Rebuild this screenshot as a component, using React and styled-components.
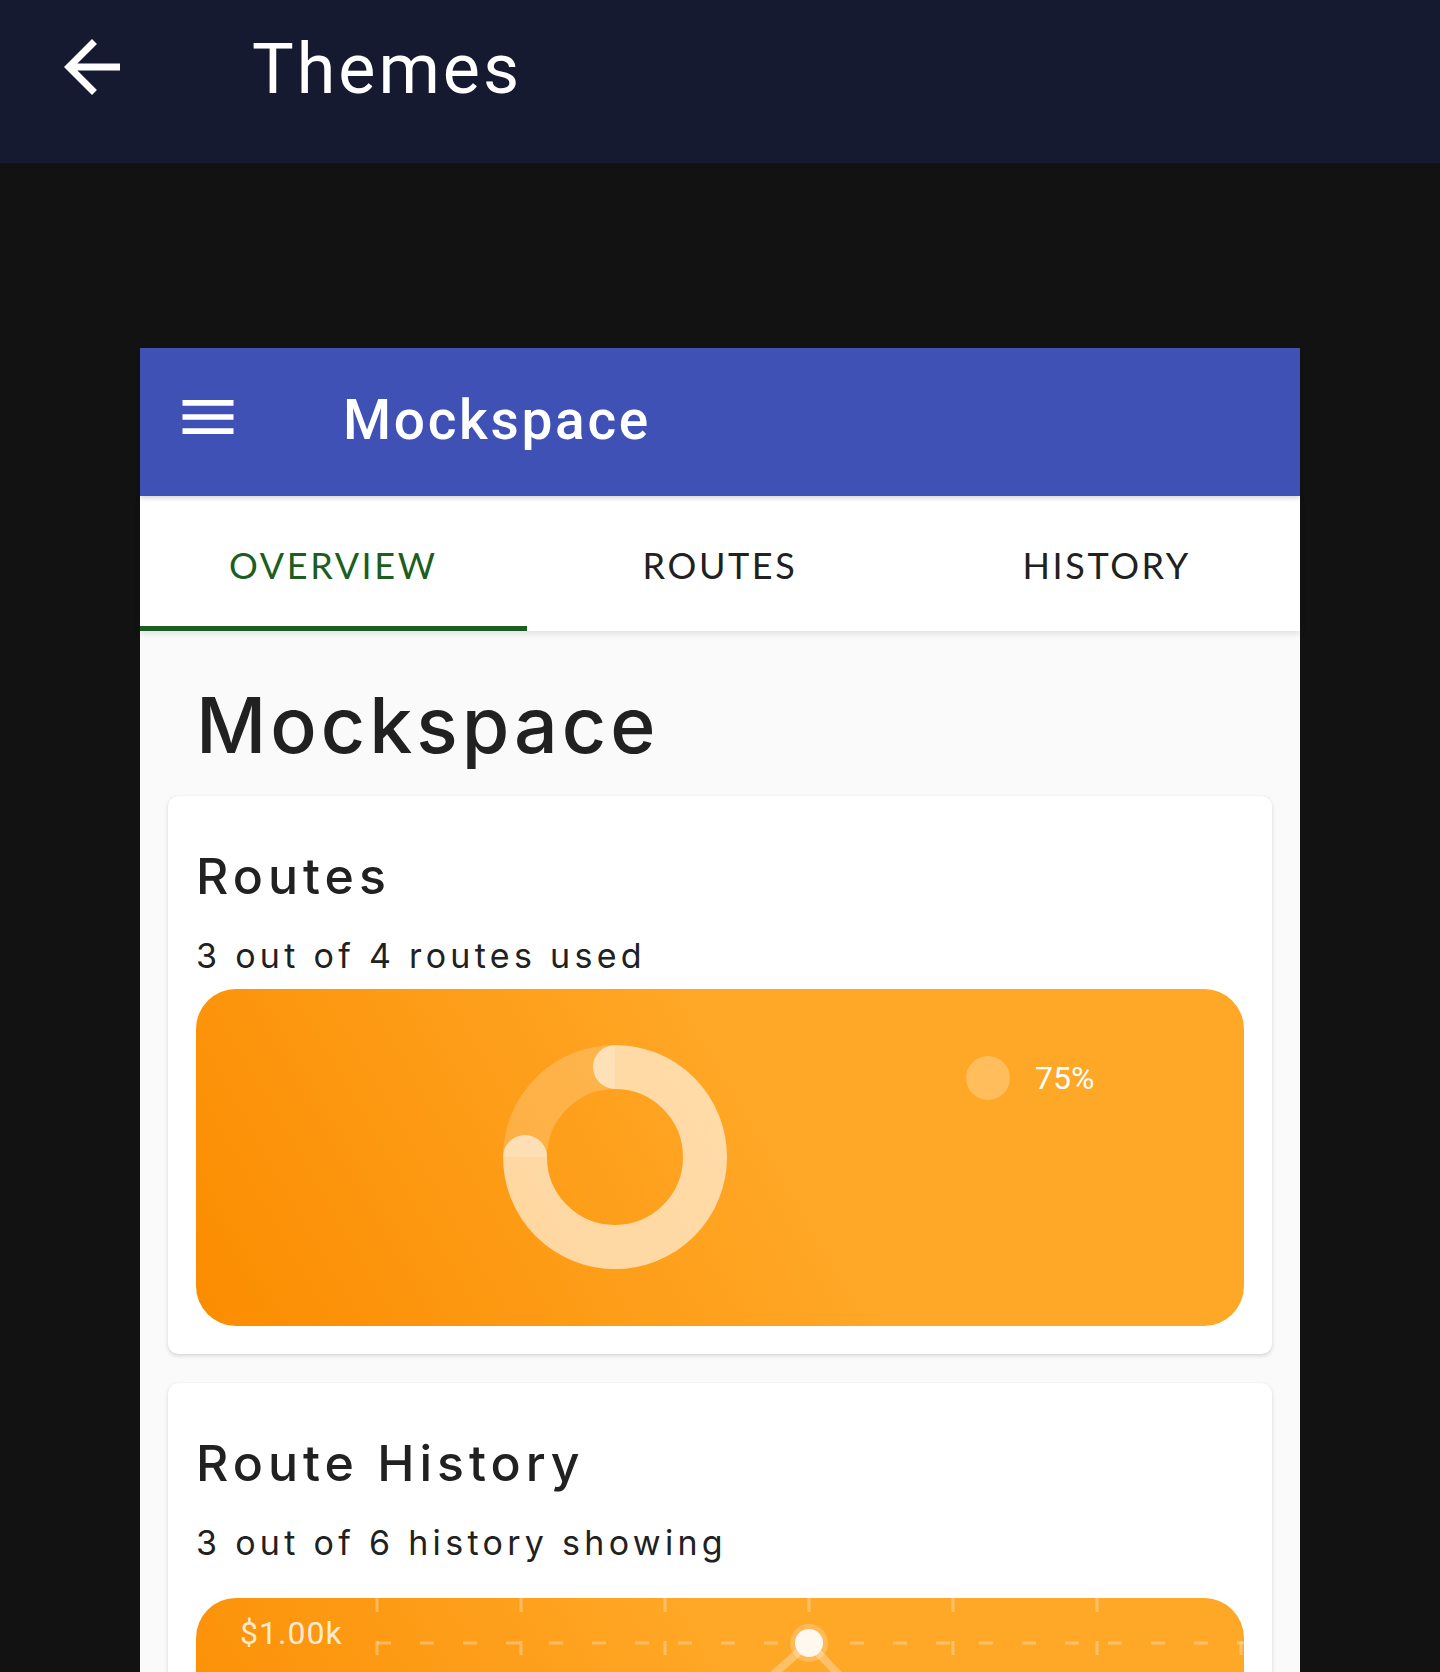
import React from 'react';
import styled, { createGlobalStyle } from 'styled-components';

const Global = createGlobalStyle`
  html, body { margin: 0; padding: 0; background: #121212; overflow: hidden; }
  body { font-family: Roboto, "Liberation Sans", sans-serif; }
  * { box-sizing: border-box; }
`;

const Page = styled.div`
  width: 1440px;
  height: 1672px;
  overflow: hidden;
  background: #121212;
`;

const TopBar = styled.header`
  height: 163px;
  background: #161a30;
  display: flex;
  align-items: flex-start;
  padding-left: 50px;
`;

const BackIcon = styled.svg`
  width: 84px;
  height: 84px;
  margin-top: 25px;
  flex: none;
  fill: #ffffff;
`;

const TopTitle = styled.h1`
  margin: 34px 0 0 118px;
  font: 400 70px/70px Roboto, "Liberation Sans", sans-serif;
  letter-spacing: 3px;
  color: #ffffff;
`;

const Stage = styled.main`
  padding-top: 185px;
`;

const Phone = styled.section`
  width: 1160px;
  margin: 0 auto;
  background: #fafafa;
  min-height: 1400px;
`;

const AppBar = styled.div`
  position: relative;
  z-index: 2;
  height: 148px;
  background: #3f51b5;
  display: flex;
  align-items: flex-start;
  padding-left: 34px;
  box-shadow: 0 2px 5px rgba(0, 0, 0, 0.18);
`;

const MenuIcon = styled.svg`
  width: 68px;
  height: 68px;
  margin-top: 35px;
  flex: none;
  fill: #ffffff;
`;

const AppTitle = styled.div`
  margin: 45px 0 0 101px;
  font: 500 55px/55px Roboto, "Liberation Sans", sans-serif;
  letter-spacing: 2.7px;
  color: #ffffff;
`;

const Tabs = styled.nav`
  position: relative;
  z-index: 1;
  display: grid;
  grid-template-columns: repeat(3, 1fr);
  background: #ffffff;
  box-shadow: 0 3px 6px rgba(0, 0, 0, 0.1);
`;

const Tab = styled.div`
  height: 135px;
  padding-top: 51px;
  text-align: center;
  font: 400 36px/36px Lato, "Open Sans", sans-serif;
  letter-spacing: 2.6px;
  color: ${(p) => (p.$active ? '#1b5e20' : '#212121')};
  box-shadow: ${(p) => (p.$active ? 'inset 0 -5px 0 #1b5e20' : 'none')};
`;

const Content = styled.div`
  padding: 48px 28px 0;
`;

const Heading = styled.h2`
  margin: 0 0 25px;
  padding-left: 28px;
  font: 500 77px/92px Inter, "Open Sans", sans-serif;
  letter-spacing: 4px;
  color: #212121;
`;

const Card = styled.article`
  background: #ffffff;
  border-radius: 10px;
  padding: 28px;
  margin-bottom: 29px;
  box-shadow: 0 2px 4px rgba(0, 0, 0, 0.14), 0 0 1px rgba(0, 0, 0, 0.1);
`;

const CardTitle = styled.h3`
  margin: 22px 0 0;
  font: 500 50px/60px Inter, "Open Sans", sans-serif;
  letter-spacing: 5px;
  color: #212121;
`;

const CardSub = styled.p`
  margin: 30px 0 0;
  font: 400 34px/40px Inter, "Open Sans", sans-serif;
  letter-spacing: 4.3px;
  color: #212121;
`;

const ChartBox = styled.div`
  margin-top: ${(p) => p.$gap}px;
  height: 337px;
  border-radius: 40px;
  overflow: hidden;
  background: linear-gradient(60deg, #fb8c00 0%, #ffa726 55%, #ffa726 100%);
`;

const ChartSvg = styled.svg`
  display: block;
  width: 100%;
  height: 100%;
`;

const ChartText = styled.text`
  font-family: Roboto, "Liberation Sans", sans-serif;
  font-size: 32px;
  font-weight: 400;
  letter-spacing: ${(p) => p.$spacing || 0}px;
`;

function Donut() {
  const cx = 419;
  const cy = 168;
  const r = 90;
  return (
    <ChartSvg viewBox="0 0 1048 337" preserveAspectRatio="none">
      <path
        d={`M ${cx - r} ${cy} A ${r} ${r} 0 0 1 ${cx} ${cy - r}`}
        fill="none"
        stroke="rgba(255,255,255,0.2)"
        strokeWidth="44"
      />
      <path
        d={`M ${cx} ${cy - r} A ${r} ${r} 0 1 1 ${cx - r} ${cy}`}
        fill="none"
        stroke="rgba(255,255,255,0.6)"
        strokeWidth="44"
        strokeLinecap="round"
      />
      <circle cx="792" cy="89" r="22" fill="rgba(255,255,255,0.25)" />
      <ChartText x="839" y="100" fill="#ffffff">75%</ChartText>
    </ChartSvg>
  );
}

function LineChart() {
  const xs = [181, 325, 469, 613, 757, 901, 1045];
  const grid = 'rgba(255,255,255,0.3)';
  return (
    <ChartSvg viewBox="0 0 1048 337" preserveAspectRatio="none">
      {xs.map((x) => (
        <line key={x} x1={x} y1="0" x2={x} y2="337" stroke={grid} strokeWidth="3" strokeDasharray="14 29" />
      ))}
      {[45, 130, 215, 300].map((y) => (
        <line key={y} x1="181" y1={y} x2="1048" y2={y} stroke={grid} strokeWidth="3" strokeDasharray="14 29" />
      ))}
      <polyline
        points="37,290 181,230 325,200 469,172 613,45 757,199 901,230 1048,210"
        fill="none"
        stroke="rgba(255,255,255,0.3)"
        strokeWidth="8"
        strokeLinejoin="round"
      />
      <circle cx="613" cy="45" r="19" fill="rgba(255,255,255,0.22)" />
      <circle cx="613" cy="45" r="14" fill="#fff8ef" />
      <ChartText x="44" y="46" fill="rgba(255,255,255,0.82)" $spacing={1}>$1.00k</ChartText>
    </ChartSvg>
  );
}

export default function App() {
  return (
    <Page>
      <Global />
      <TopBar>
        <BackIcon viewBox="0 0 24 24">
          <path d="M20 11H7.83l5.59-5.59L12 4l-8 8 8 8 1.41-1.41L7.83 13H20v-2z" />
        </BackIcon>
        <TopTitle>Themes</TopTitle>
      </TopBar>
      <Stage>
        <Phone>
          <AppBar>
            <MenuIcon viewBox="0 0 24 24">
              <path d="M3 18h18v-2H3v2zm0-5h18v-2H3v2zm0-7v2h18V6H3z" />
            </MenuIcon>
            <AppTitle>Mockspace</AppTitle>
          </AppBar>
          <Tabs>
            <Tab $active>OVERVIEW</Tab>
            <Tab>ROUTES</Tab>
            <Tab>HISTORY</Tab>
          </Tabs>
          <Content>
            <Heading>Mockspace</Heading>
            <Card>
              <CardTitle>Routes</CardTitle>
              <CardSub>3 out of 4 routes used</CardSub>
              <ChartBox $gap={13}>
                <Donut />
              </ChartBox>
            </Card>
            <Card>
              <CardTitle>Route History</CardTitle>
              <CardSub>3 out of 6 history showing</CardSub>
              <ChartBox $gap={35}>
                <LineChart />
              </ChartBox>
            </Card>
          </Content>
        </Phone>
      </Stage>
    </Page>
  );
}
